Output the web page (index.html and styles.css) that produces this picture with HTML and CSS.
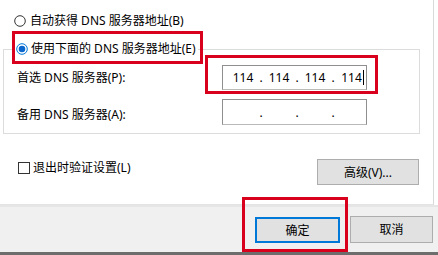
FILE: index.html
```html
<!DOCTYPE html>
<html lang="zh-CN">
<head>
<meta charset="utf-8">
<link rel="stylesheet" href="styles.css">
</head>
<body>
<div class="page">
  <div class="panel">
    <div class="radio-row">
      <svg class="radio" width="12" height="12" viewBox="0 0 12 12"><circle cx="6" cy="6" r="5.3" fill="#fff" stroke="#333" stroke-width="1"/></svg>
      <span>自动获得 DNS 服务器地址(B)</span>
    </div>
    <div class="group">
      <div class="legend">
        <svg class="radio" width="12" height="12" viewBox="0 0 12 12"><circle cx="6" cy="6" r="5.3" fill="#fff" stroke="#0078d7" stroke-width="1"/><circle cx="6" cy="6" r="3.3" fill="#0a66cc"/></svg>
        <span>使用下面的 DNS 服务器地址(E)</span>
      </div>
      <div class="field-row first">
        <span class="label">首选 DNS 服务器(P):</span>
        <div class="ip">
          <span class="seg">114</span><span class="dot">.</span>
          <span class="seg">114</span><span class="dot">.</span>
          <span class="seg">114</span><span class="dot">.</span>
          <span class="seg last">114<span class="caret"></span></span>
        </div>
      </div>
      <div class="field-row second">
        <span class="label lower">备用 DNS 服务器(A):</span>
        <div class="ip tall">
          <span class="seg"></span><span class="dot">.</span>
          <span class="seg"></span><span class="dot">.</span>
          <span class="seg"></span><span class="dot">.</span>
          <span class="seg"></span>
        </div>
      </div>
    </div>
    <div class="check-row">
      <div class="check">
        <span class="box"></span>
        <span>退出时验证设置(L)</span>
      </div>
      <button class="btn adv">高级(V)...</button>
    </div>
  </div>
  <div class="footer">
    <button class="btn ok">确定</button>
    <button class="btn cancel">取消</button>
  </div>
  <div class="mark mark1"></div>
  <div class="mark mark2"></div>
  <div class="mark mark3"></div>
</div>
</body>
</html>
```
FILE: styles.css
```css
html, body {
  margin: 0;
  padding: 0;
  background: #fff;
}
.page {
  position: relative;
  width: 438px;
  height: 255px;
  overflow: hidden;
  font-family: "Noto Sans", "Noto Sans CJK SC", sans-serif;
  font-size: 12px;
  line-height: 15px;
  color: #000;
}
.panel {
  box-sizing: border-box;
  width: 434px;
  height: 205px;
  border-right: 1px solid #d9d9d9;
  border-bottom: 1px solid #e3e3e3;
  padding-top: 13px;
  background: #fff;
}
.radio-row {
  display: flex;
  align-items: center;
  height: 15px;
  margin-left: 14px;
  gap: 4px;
}
.radio {
  display: block;
  flex: none;
}
.group {
  box-sizing: border-box;
  width: 417px;
  margin: 21px 0 0 3px;
  border: 1px solid #dcdcdc;
  padding-bottom: 8px;
}
.legend {
  display: flex;
  align-items: center;
  gap: 3px;
  height: 15px;
  width: max-content;
  margin: -9px 0 0 11px;
  padding: 0 2px 0 1px;
  background: #fff;
}
.field-row {
  display: flex;
  align-items: center;
  padding-left: 13px;
}
.field-row.first {
  margin-top: 9px;
}
.field-row.second {
  margin-top: 9px;
}
.label {
  width: 205px;
  flex: none;
}
.label.lower {
  padding-top: 5px;
}
.ip {
  box-sizing: border-box;
  width: 145px;
  height: 25px;
  border: 1px solid #8f8f8f;
  border-bottom-color: #b9b9b9;
  display: flex;
  align-items: center;
  padding-left: 5px;
  background: #fff;
}
.ip.tall {
  height: 26px;
}
.seg {
  width: 30px;
  text-align: center;
  display: flex;
  justify-content: center;
  align-items: center;
  height: 15px;
}
.seg.last {
  padding-left: 3px;
  box-sizing: border-box;
}
.dot {
  width: 6px;
  text-align: center;
}
.caret {
  display: inline-block;
  width: 1px;
  height: 15px;
  background: #000;
  margin-left: 1px;
}
.check-row {
  display: flex;
  justify-content: space-between;
  align-items: flex-start;
  margin-top: 25px;
  padding-left: 18px;
  padding-right: 14px;
}
.check {
  display: flex;
  align-items: center;
  gap: 3px;
  margin-top: 1px;
}
.box {
  box-sizing: border-box;
  width: 12px;
  height: 12px;
  border: 1px solid #333;
  background: #fff;
}
.btn {
  box-sizing: border-box;
  font-family: "Noto Sans", "Noto Sans CJK SC", sans-serif;
  font-size: 12px;
  line-height: 15px;
  color: #000;
  background: #e1e1e1;
  border: 1px solid #adadad;
  padding: 0;
  margin: 0;
  height: 26px;
}
.adv {
  width: 102px;
}
.footer {
  box-sizing: border-box;
  height: 50px;
  background: #f0f0f0;
  border-top: 2px solid #e6e6e6;
  border-bottom: 3px solid #6d6d6d;
  display: flex;
  justify-content: flex-end;
  align-items: flex-start;
  gap: 10px;
  padding: 10px 5px 0 0;
}
.ok {
  width: 85px;
  height: 26px;
  border: 2px solid #0078d7;
}
.cancel {
  width: 83px;
  height: 27px;
  margin-top: -1px;
}
.mark {
  position: absolute;
  box-sizing: border-box;
  border: 3px solid #d8001c;
}
.mark1 {
  left: 12px;
  top: 31px;
  width: 191px;
  height: 33px;
}
.mark2 {
  left: 205px;
  top: 55px;
  width: 173px;
  height: 39px;
}
.mark3 {
  left: 242px;
  top: 197px;
  width: 106px;
  height: 55px;
}
```
